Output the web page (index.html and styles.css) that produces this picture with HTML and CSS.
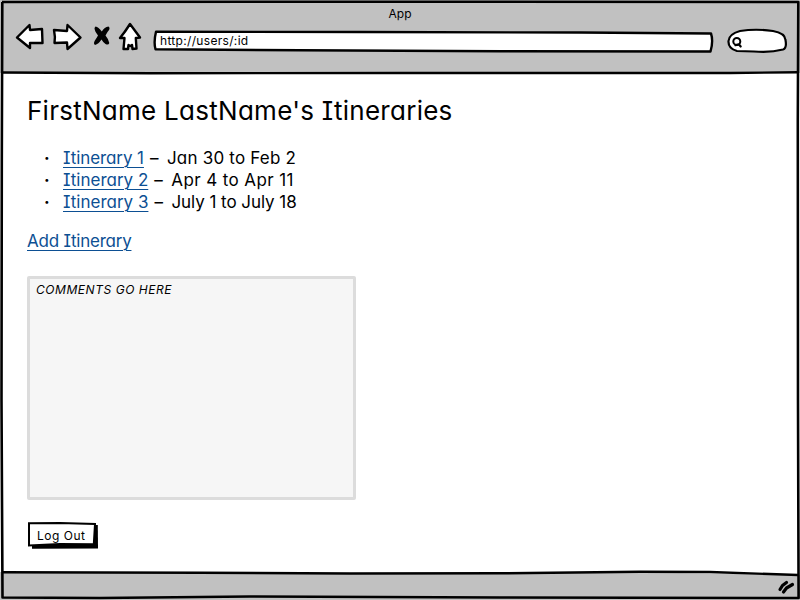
FILE: index.html
```html
<!DOCTYPE html>
<html lang="en">
<head>
<meta charset="utf-8">
<title>App</title>
<link rel="stylesheet" href="styles.css">
</head>
<body>
<div class="window">
  <header class="chrome">
    <div class="caption">App</div>
    <div class="toolbar">
      <svg class="nav" width="132" height="36" viewBox="12 20 132 36">
        <g fill="#fff" stroke="#000" stroke-width="2.4" stroke-linejoin="round" stroke-linecap="round">
          <path d="M17 37.500L29.500 25L30 30L42 29L42.500 43L30 43L30 48Z"/>
          <path d="M54 30L67 31L67.500 25L80.500 37.500L67.500 49L67 42.500L54.500 43Q55.500 37 54 30Z"/>
          <path d="M130 24L140 37.500L135.800 38L136.500 48.500L132.500 49L132 45L130.500 46L128.500 45L128 49L123.500 49L124.500 38L120 38Q125 32 130 24Z"/>
        </g>
        <path d="M95.500 26.500Q98.500 27 101.800 31.500Q104.500 27 108.500 26.500Q111 28.500 107.500 32L105.500 35.500Q108.500 39 109.300 43Q108.500 45.500 105.500 44Q103.500 43 101.500 39.500Q98.500 44 95 45Q92.500 43.500 96.500 38L98 35.500Q94.500 31 94.500 28Z"/>
      </svg>
      <div class="address">
        <svg class="shape" width="564" height="28" viewBox="152 27 564 28"><path d="M156 31.700L360 32L580 32.500L711 33.500Q713.500 41 710.500 51.500L500 51.300L300 50.300L155.500 49.300Q153.500 42 156 31.700Z" fill="#fff" stroke="#000" stroke-width="2.400" stroke-linejoin="round"/></svg>
        <span class="url">http://users/:id</span>
      </div>
      <svg class="search" width="64" height="30" viewBox="726 26 64 30">
        <g fill="#fff" stroke="#000" stroke-width="2.200" stroke-linecap="round"><path d="M737 51Q728 48.500 728.500 41Q729 34 740 31Q756 28.500 773 31Q785 33 785.500 40Q787 48 783 49.500Q770 53 754 51.500L737 51Z"/><circle cx="736.800" cy="41.400" r="3.500" stroke-width="2"/><path d="M735.500 45.200L739 44.500L740.700 46.500" fill="none"/></g>
      </svg>
    </div>
  </header>
  <main class="page">
    <h1 class="title">FirstName LastName's Itineraries</h1>
    <ul class="trips">
      <li><a class="link first" href="#">Itinerary 1</a><span class="dash">–</span><span class="winter">Jan 30 to Feb 2</span></li>
      <li><a class="link" href="#">Itinerary 2</a><span class="dash">–</span><span class="spring">Apr 4 to Apr 11</span></li>
      <li><a class="link" href="#">Itinerary 3</a><span class="dash">–</span><span class="summer">July 1 to July 18</span></li>
    </ul>
    <a class="link add" href="#">Add Itinerary</a>
    <div class="comments">COMMENTS GO HERE</div>
    <button class="logout">
      <svg class="shape" width="72" height="28" viewBox="27 521 72 28"><path d="M32 525L97.800 525L98 548.500L32 548.700Z"/><path d="M29 523.300L60 523L95 524L93.800 544.300L60 544.100L29 545.500Z" fill="#fff" stroke="#000" stroke-width="2"/></svg>
      <span class="label">Log Out</span>
    </button>
  </main>
  <footer class="status"></footer>
  <svg class="frame" width="800" height="600" viewBox="0 0 800 600">
    <path d="M0 572L350 574L650 572.500L800 575V560H0Z" fill="#fff"/>
    <g fill="none" stroke="#000" stroke-linejoin="round">
      <path d="M2 2L400 1.700L798.300 2L797.800 120L798 400L798.600 598L500 597.500L250 596.500L100 598L2.500 597.500L1.500 400L1.800 160L2.300 2" stroke-width="2.600"/>
      <path d="M2 72.500L150 73.200L400 73L730 73L798 72.300" stroke-width="2.400"/>
      <path d="M2 572.200L200 572.800L350 573.500L500 573.300L640 571.700L710 572L798 575" stroke-width="2.400"/>
      <path d="M780 589.500L782.500 585.500L786.500 582.500M783.500 592L786.500 588L792.500 584.500" stroke-width="3.200" stroke-linecap="round"/>
    </g>
  </svg>
</div>
</body>
</html>
```
FILE: styles.css
```css
*, *::before { box-sizing: border-box; }
body {
  margin: 0;
  background: #fff;
  color: #000;
  font-family: Inter, "Liberation Sans", sans-serif;
  font-feature-settings: "cv11" 1, "cv08" 1, "calt" 0;
  font-weight: 430;
}
.window {
  position: relative;
  width: 800px;
  height: 600px;
  display: flex;
  flex-direction: column;
  overflow: hidden;
}
.frame { position: absolute; inset: 0; pointer-events: none; }
.chrome { height: 73px; background: #c1c1c1; padding-top: 5px; }
.caption { height: 15px; line-height: 17px; text-align: center; font-size: 12px; }
.toolbar { display: flex; padding-left: 12px; }
.nav { display: block; }
.address { position: relative; width: 564px; height: 28px; margin: 7px 10px 0 8px; }
.shape { position: absolute; left: 0; top: 0; }
.url { position: relative; display: block; padding-left: 8px; line-height: 27px; font-size: 12px; letter-spacing: 0.32px; white-space: nowrap; }
.search { display: block; margin-top: 6px; }
.page { flex: 1; padding: 22px 27px 0; display: flex; flex-direction: column; align-items: flex-start; }
.title { margin: 0; font-size: 26px; line-height: 32px; font-weight: 430; letter-spacing: 0.27px; white-space: nowrap; }
.trips { list-style: none; margin: 20px 0 0; padding: 0; font-size: 17px; line-height: 22px; }
.trips li { display: flex; height: 22px; white-space: nowrap; }
.trips li::before { content: "·"; width: 36px; padding-left: 17px; font-weight: 700; }
.link {
  color: #0c4f93;
  text-decoration: underline;
  text-decoration-thickness: 1px;
  text-underline-offset: 3px;
}
.first { letter-spacing: -0.08px; }
.dash { width: 23px; padding-left: 6px; }
.winter { letter-spacing: 0.2px; }
.spring { letter-spacing: 0.4px; }
.summer { letter-spacing: -0.05px; }
.add { margin-top: 17px; font-size: 17px; line-height: 22px; letter-spacing: -0.23px; }
.comments {
  width: 329px;
  height: 224px;
  margin-top: 24px;
  padding: 2px 6px;
  border: 3px solid #dcdcdc;
  border-radius: 2px;
  background: #f6f6f6;
  font-size: 12px;
  line-height: 17px;
  letter-spacing: 0.55px;
  font-style: italic;
}
.logout {
  position: relative;
  width: 72px;
  height: 28px;
  margin: 21px 0 0;
  padding: 0;
  border: 0;
  background: none;
  font: inherit;
  font-feature-settings: inherit;
  font-size: 12px;
  letter-spacing: 0.5px;
  color: #000;
}
.label { position: relative; display: block; text-align: left; padding-left: 10px; line-height: 25px; }
.status { height: 30px; background: #c1c1c1; }
```
